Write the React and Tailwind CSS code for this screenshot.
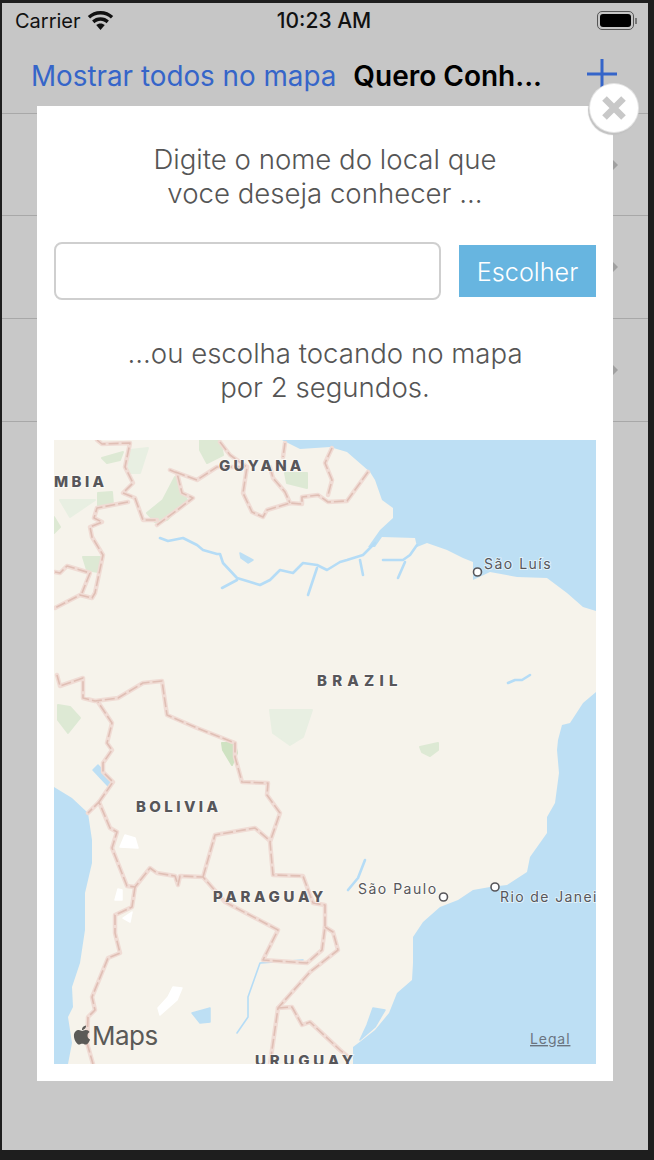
import React from "react";
import { FaApple } from "react-icons/fa";

const WATER = "#bddff4";

const oceans = [
  "282,440 300,449 330,447 347,452 370,472 375,480 382,500 393,508 393,518 380,530 368,547 375,547 382,537 415,538 417,547 427,543 447,550 463,558 473,562 473,580 490,572 517,577 547,578 567,593 583,607 596,611 596,440",
  "596,692 583,703 570,723 562,725 558,740 557,750 559,773 555,803 547,817 547,833 530,857 527,872 507,885 490,887 473,890 458,900 440,907 423,922 413,937 413,963 412,980 397,993 389,1013 375,1030 361,1041 353,1047 353,1064 596,1064",
  "54,787 72,798 88,813 92,840 92,863 85,893 85,930 80,963 72,987 73,1007 68,1017 72,1043 68,1064 54,1064",
];

const lakes = [
  "240,553 253,560 248,563 241,558",
  "192,1013 210,1008 210,1022 200,1023",
  "93,770 98,765 113,782 108,786",
  "373,1008 385,1010 375,1027 360,1040 367,1025",
];

const rivers = [
  "160,538 168,541 183,538 197,545 203,550 217,554 220,554 223,563 237,578 247,581 260,585 270,580 280,570 293,573 303,563 317,565 327,570 340,562 347,560 363,555 375,543",
  "237,580 222,588",
  "317,568 308,595",
  "360,560 363,575",
  "383,560 403,560 410,555 417,545",
  "405,562 398,578",
  "348,890 358,878 365,860",
  "508,683 515,680 522,680 530,675",
];

const thinRivers = ["237,1033 248,1017 248,997 260,963 303,960"];

const parks = [
  { c: "#dde9d4", p: "200,440 220,440 223,455 207,463 200,450" },
  { c: "#dde9d4", p: "102,458 123,452 120,460 107,463" },
  { c: "#e8efe2", p: "130,450 148,448 140,473 128,473" },
  { c: "#dde9d4", p: "147,513 163,500 175,477 187,500 167,520 155,522" },
  { c: "#dde9d4", p: "285,473 307,473 307,488 287,483" },
  { c: "#dde9d4", p: "98,493 112,492 113,505 98,507" },
  { c: "#e8efe2", p: "60,500 95,500 70,517" },
  { c: "#dde9d4", p: "54,517 60,527 54,533" },
  { c: "#dde9d4", p: "83,557 100,557 98,572 87,570" },
  { c: "#dde9d4", p: "58,705 70,707 80,718 68,733 58,720" },
  { c: "#e8efe2", p: "270,710 312,710 303,737 290,745 273,733" },
  { c: "#cfe2c2", p: "222,743 235,743 237,753 232,765 223,750" },
  { c: "#dde9d4", p: "420,747 438,743 438,750 430,756 422,752" },
];

const salt = [
  "120,847 125,835 135,838 138,848",
  "115,900 118,889 122,890 122,900",
  "123,918 132,912 130,922",
  "158,1008 168,997 173,987 182,988 177,1000 160,1015",
];

const borders = [
  "97,440 102,444 130,443 125,467 133,483 123,493 135,498 143,520 157,520",
  "157,525 180,508 193,498 182,493 177,473 170,470 197,480 217,467 247,467",
  "220,442 230,455 247,467 243,493 252,512 263,517 267,510 290,503 302,504 302,497 318,495 328,502 347,501 368,472",
  "270,467 273,478 285,492 290,503",
  "285,443 283,457",
  "332,448 325,463 332,480 328,495",
  "128,502 97,508 94,518 102,522 90,527 92,537 103,555 95,593 92,598 80,595 55,608",
  "55,572 60,573 67,566 90,573 82,593",
  "57,675 60,686 83,678 83,698 95,701 118,698 143,683 162,681 167,715 197,728 235,743 235,757 242,782 268,783 267,795 280,813 270,842 273,875 303,876 313,903 325,905 325,927 322,950 307,963 263,960 278,930 225,902 203,877 180,876 178,885 175,876 157,873 150,868 135,887 127,886 112,848 117,832 110,828 99,802 88,813",
  "99,802 113,782 103,772 103,763 112,750 107,743 112,723 98,702",
  "135,887 132,907 115,915 115,933 120,953 108,958 92,997 95,1010 88,1017 87,1043 93,1064",
  "203,877 215,835 255,828 269,840",
  "325,927 333,932 338,950 310,972 278,1008 270,1064",
  "278,1008 292,1007 302,1025 310,1022 340,1050 347,1056",
];

const haloClass = "font-['Inter',sans-serif]";

function MapLabel({ x, y, spacing, size = 15, weight = 800, children }) {
  return (
    <text
      x={x}
      y={y}
      fontSize={size}
      fontWeight={weight}
      letterSpacing={spacing}
      fill="#57565a"
      stroke="#ffffff"
      strokeOpacity="0.55"
      strokeWidth="2"
      paintOrder="stroke"
      className={haloClass}
    >
      {children}
    </text>
  );
}

function Pin({ x, y }) {
  return <circle cx={x} cy={y} r="4" fill="#ffffff" stroke="#57565a" strokeWidth="1.6" />;
}

function MapArt() {
  return (
    <svg viewBox="54 440 542 624" className="block w-[542px] h-[624px]" role="img" aria-label="Mapa">
      <rect x="54" y="440" width="542" height="624" fill="#f6f3eb" />
      <g className="blur-[0.5px]">
        {oceans.map((p) => (
          <polygon key={p} points={p} fill={WATER} />
        ))}
        {parks.map((g) => (
          <polygon key={g.p} points={g.p} fill={g.c} stroke={g.c} strokeWidth="2" strokeLinejoin="round" />
        ))}
        {salt.map((p) => (
          <polygon key={p} points={p} fill="#ffffff" stroke="#ffffff" strokeWidth="1.5" strokeLinejoin="round" />
        ))}
        {lakes.map((p) => (
          <polygon key={p} points={p} fill={WATER} stroke={WATER} strokeWidth="1.5" strokeLinejoin="round" />
        ))}
        {rivers.map((p) => (
          <polyline key={p} points={p} fill="none" stroke="#b5dcf6" strokeWidth="2.6" strokeLinejoin="round" strokeLinecap="round" />
        ))}
        {thinRivers.map((p) => (
          <polyline key={p} points={p} fill="none" stroke="#b5dcf6" strokeWidth="1.6" strokeLinejoin="round" strokeLinecap="round" />
        ))}
        {borders.map((p) => (
          <polyline key={p} points={p} fill="none" stroke="#f0dcd5" strokeWidth="4.5" strokeLinejoin="round" strokeLinecap="round" />
        ))}
        {borders.map((p) => (
          <polyline key={p + "d"} points={p} fill="none" stroke="#e0bfb5" strokeWidth="1.6" strokeDasharray="10 3" strokeLinejoin="round" />
        ))}
      </g>
      <MapLabel x={54} y={486.5} spacing={3.4}>MBIA</MapLabel>
      <MapLabel x={219} y={470.5} spacing={3.1}>GUYANA</MapLabel>
      <MapLabel x={317} y={685.5} spacing={5.2}>BRAZIL</MapLabel>
      <MapLabel x={136} y={811.5} spacing={3.4}>BOLIVIA</MapLabel>
      <MapLabel x={213} y={901.5} spacing={3.7}>PARAGUAY</MapLabel>
      <MapLabel x={255} y={1066} spacing={3.8}>URUGUAY</MapLabel>
      <MapLabel x={484} y={568.5} size={14} weight={400} spacing={1.5}>São Luís</MapLabel>
      <MapLabel x={358} y={893.5} size={14} weight={400} spacing={1.5}>São Paulo</MapLabel>
      <MapLabel x={500} y={901.5} size={14} weight={400} spacing={1.4}>Rio de Janeiro</MapLabel>
      <Pin x={477.5} y={572} />
      <Pin x={443.5} y={897} />
      <Pin x={495} y={887} />
      <FaApple x={71} y={1024} size={22} color="#5b5a57" />
      <text x={92} y={1045} fontSize="26" fontWeight="400" letterSpacing="-0.5" fill="#5b5a57" className={haloClass}>Maps</text>
      <text x={530} y={1044} fontSize="14" letterSpacing="0.9" fill="#6a7480" textDecoration="underline" className={haloClass}>Legal</text>
    </svg>
  );
}

function Wifi() {
  return (
    <svg width="27" height="19" viewBox="0 0 27 19" className="ml-[6px]">
      <path d="M13.5 0C8.6 0 4.2 1.9 .8 5l2.3 2.6C5.9 5 9.5 3.5 13.5 3.5s7.6 1.5 10.4 4.1L26.2 5C22.8 1.9 18.4 0 13.5 0z" fill="#111" />
      <path d="M13.5 6.3c-3.2 0-6.2 1.2-8.4 3.3l2.3 2.6c1.6-1.5 3.7-2.4 6.1-2.4s4.5.9 6.1 2.4l2.3-2.6c-2.2-2.1-5.2-3.3-8.4-3.3z" fill="#111" />
      <path d="M13.5 12.4c-1.7 0-3.2.6-4.3 1.7l4.3 4.9 4.3-4.9c-1.1-1.1-2.6-1.7-4.3-1.7z" fill="#111" />
    </svg>
  );
}

function Row({ first }) {
  return (
    <div className={first ? "h-[102px] border-b border-[#a8a8a8] flex items-center justify-end pr-[30px]" : "h-[103px] border-b border-[#a8a8a8] flex items-center justify-end pr-[30px]"}>
      <svg width="6" height="10" viewBox="0 0 6 10"><path d="M1 0l5 5-5 5z" fill="#a0a0a0" /></svg>
    </div>
  );
}

export default function App() {
  return (
    <div className="w-[654px] h-[1160px] bg-[#1e1e1e] pt-[3px] pl-[2px] pr-[6px] pb-[10px] font-['Inter',sans-serif]">
      <div className="relative w-full h-full bg-[#c8c8c8] overflow-hidden">
        <div className="h-[35px] pl-[13px] pr-[11px] flex items-center justify-between text-[#111] text-[20px] bg-[#c6c6c6]">
          <div className="flex items-center w-[198px]">
            <span>Carrier</span>
            <Wifi />
          </div>
          <span className="font-medium text-[21px]">10:23 AM</span>
          <div className="w-[202px] flex justify-end items-center">
            <div className="w-[37px] h-[19px] rounded-[5px] border border-[#555] p-[2px] mr-[1px]">
              <div className="w-full h-full rounded-[3px] bg-black" />
            </div>
            <div className="w-[2px] h-[6px] bg-[#777]" />
          </div>
        </div>
        <div className="h-[76px] border-b border-[#a8a8a8] flex items-center pl-[29px] pr-[31px] pt-[3px] bg-[#c6c6c6]">
          <span className="text-[#3565c9] text-[27.8px] whitespace-nowrap">Mostrar todos no mapa</span>
          <span className="ml-[17px] mb-[2px] text-black text-[28px] font-semibold whitespace-nowrap">Quero Conh...</span>
          <svg width="30" height="30" viewBox="0 0 30 30" className="ml-auto mb-[6px]">
            <path d="M15 0v30M0 15h30" stroke="#3565c9" strokeWidth="3" />
          </svg>
        </div>
        <Row first />
        <Row />
        <Row />

        <div className="absolute left-[35px] top-[103px] w-[576px] h-[975px] bg-white px-[17px] pt-[36px] pb-[17px] flex flex-col">
          <p className="text-center text-[#555555] text-[27.6px] font-light leading-[34px]">
            Digite o nome do local que<br />voce deseja conhecer ...
          </p>
          <div className="mt-[32px] flex items-center justify-between">
            <input className="w-[387px] h-[58px] rounded-[8px] border-2 border-[#cfcfcf] bg-white" aria-label="Local" />
            <button className="w-[137px] h-[52px] bg-[#67b5e0] text-white text-[25.2px] font-light pt-[4px]">Escolher</button>
          </div>
          <p className="mt-[36px] text-center text-[#555555] text-[27.6px] font-light leading-[34px]">
            ...ou escolha tocando no mapa<br />por 2 segundos.
          </p>
          <div className="mt-[36px]">
            <MapArt />
          </div>
        </div>

        <div className="absolute left-[588px] top-[81px] w-[48px] h-[48px] rounded-full bg-white shadow-[0_0_0_1px_#e4e4e4,-1px_2px_1px_1px_#c2c2c2] flex items-center justify-center">
          <svg width="26" height="26" viewBox="0 0 26 26">
            <path d="M3.5 3.5l19 19M22.5 3.5l-19 19" stroke="#c8c8c8" strokeWidth="6.5" />
          </svg>
        </div>
      </div>
    </div>
  );
}
